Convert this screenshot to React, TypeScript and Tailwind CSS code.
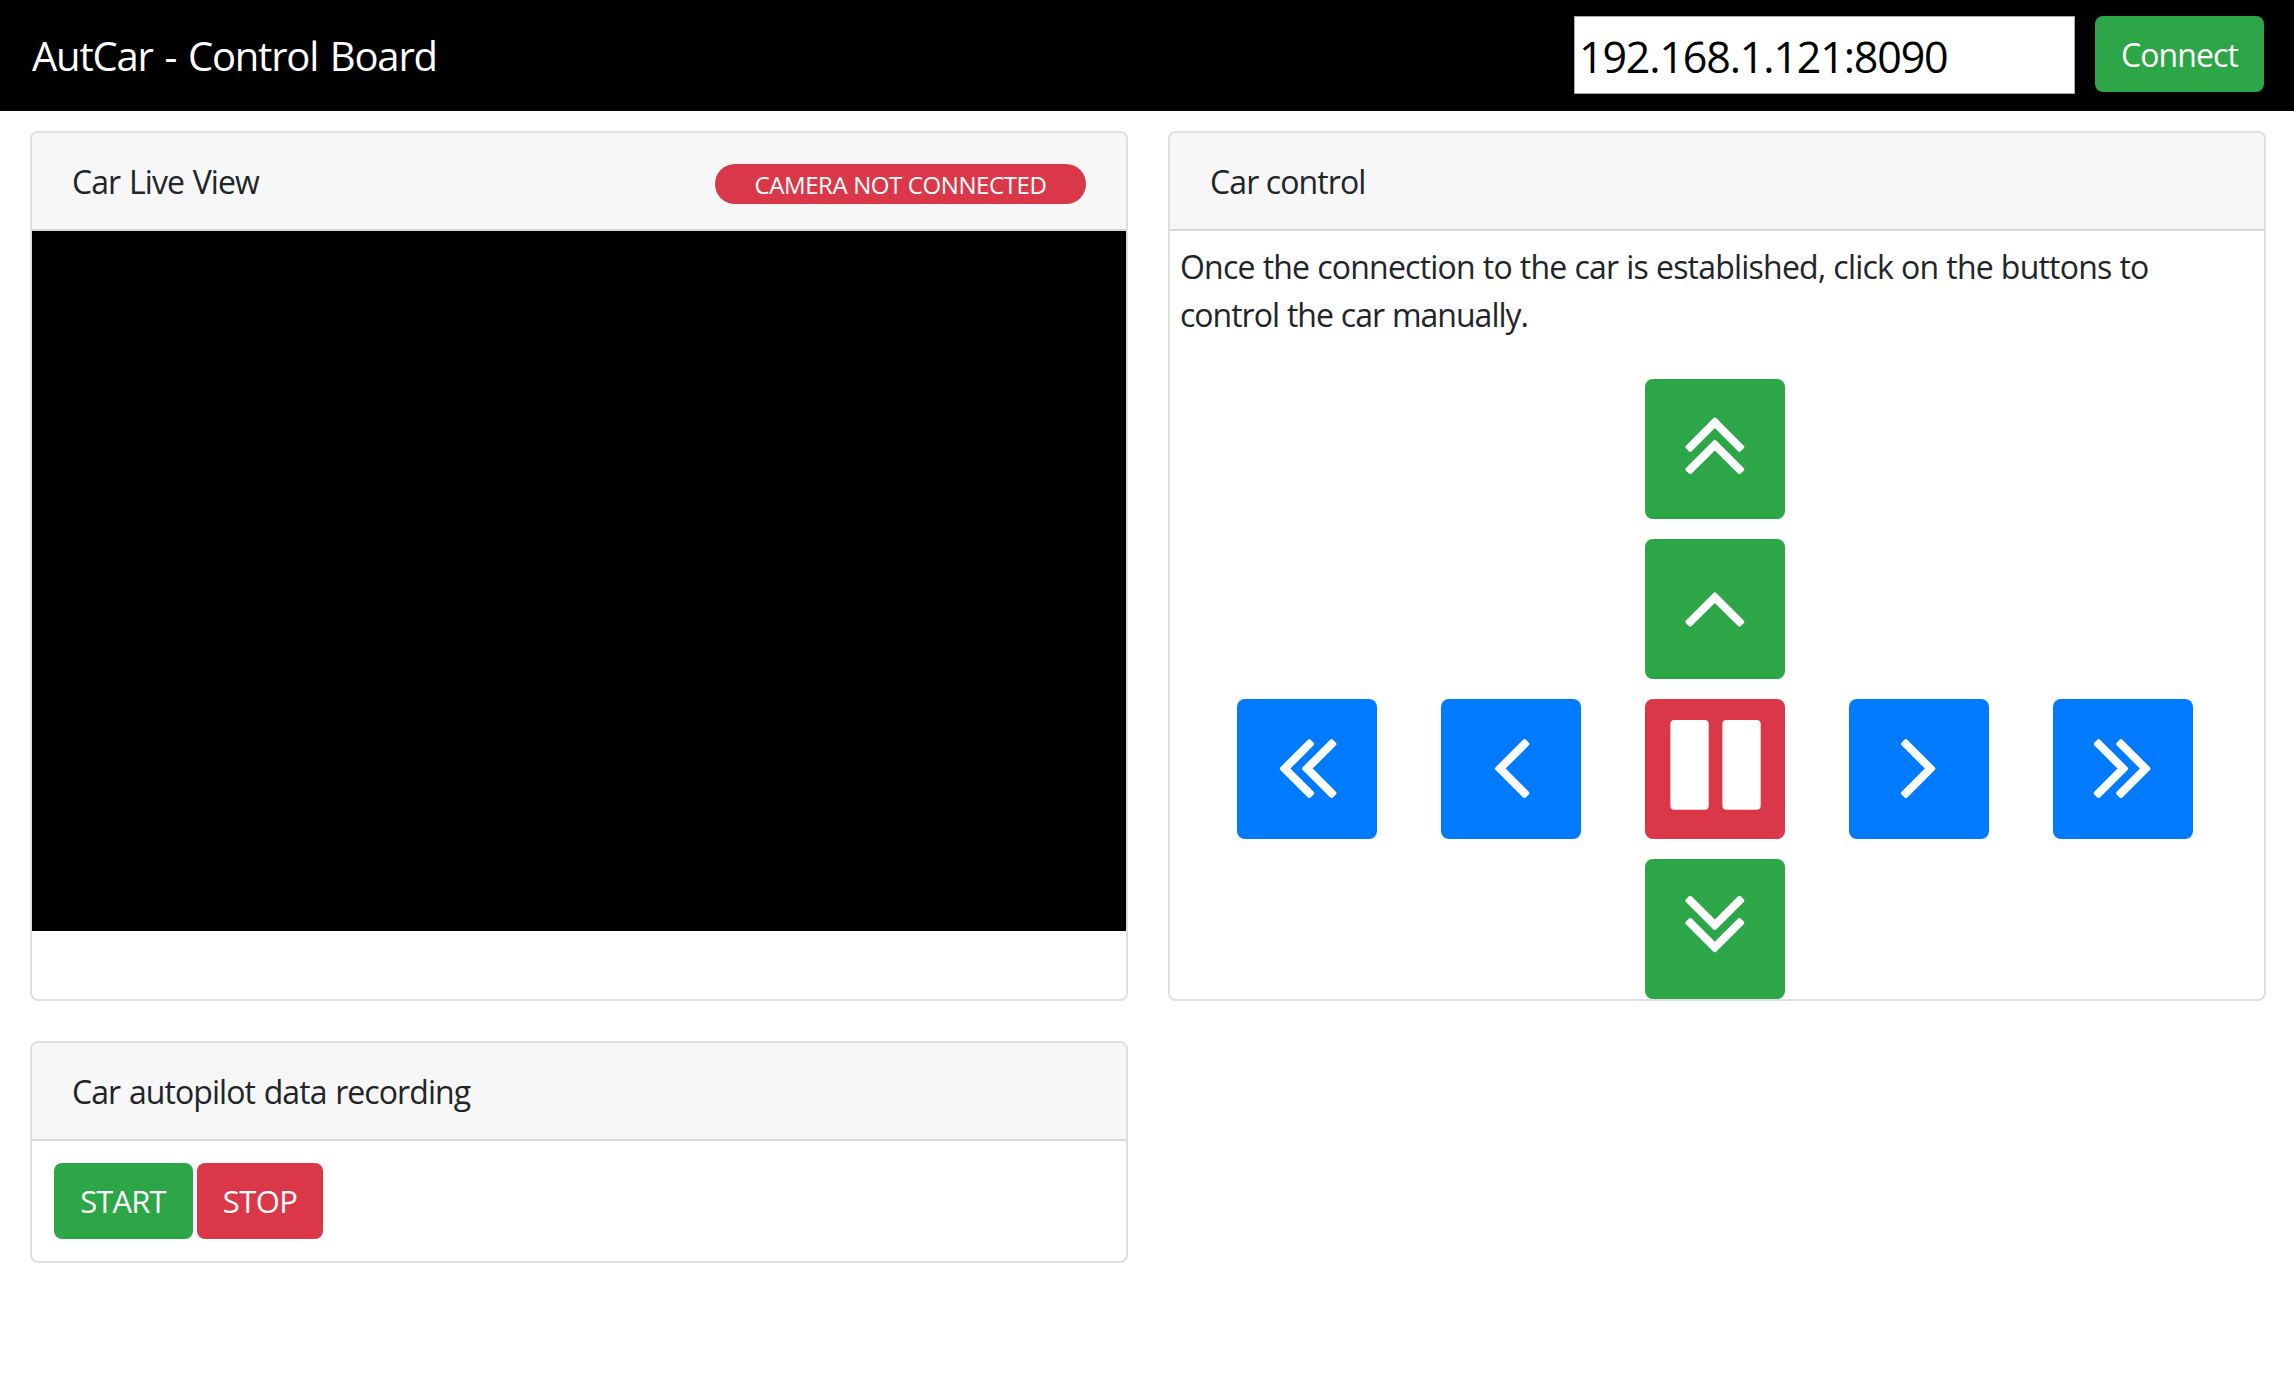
import React from "react";

type ChevronPoint = [number, number];

const ANGLE_UP =
  "M1075 736q0 13-10 23l-50 50q-10 10-23 10t-23-10l-393-393-393 393q-10 10-23 10t-23-10l-50-50q-10-10-10-23t10-23l466-466q10-10 23-10t23 10l466 466q10 10 10 23z";

function Chevrons({ rotate, at }: { rotate: number; at: ChevronPoint[] }) {
  return (
    <svg viewBox="0 0 140 140" className="block h-[140px] w-[140px] fill-white" aria-hidden="true">
      {at.map(([x, y]) => (
        <path
          key={`${x}-${y}`}
          d={ANGLE_UP}
          transform={`translate(${x} ${y}) rotate(${rotate}) scale(0.0591) translate(-576 -528)`}
        />
      ))}
    </svg>
  );
}

function PauseIcon() {
  return (
    <svg viewBox="0 0 140 140" className="block h-[140px] w-[140px] fill-white" aria-hidden="true">
      <rect x="25.4" y="21" width="38.3" height="89.7" rx="4" />
      <rect x="77.4" y="21" width="38.3" height="89.7" rx="4" />
    </svg>
  );
}

function Card({
  title,
  titleClass,
  badge,
  className = "",
  children,
}: {
  title: string;
  titleClass: string;
  badge?: React.ReactNode;
  className?: string;
  children: React.ReactNode;
}) {
  return (
    <section className={`rounded-lg border-2 border-[#dfdfdf] bg-white ${className}`}>
      <header className="flex h-[98px] items-center justify-between rounded-t-md border-b-2 border-[#d8d8d8] bg-[#f7f7f7] px-10">
        <h2 className={`pt-[2px] text-[32px] leading-[48px] ${titleClass}`}>{title}</h2>
        {badge}
      </header>
      {children}
    </section>
  );
}

function PadButton({
  label,
  className,
  children,
}: {
  label: string;
  className: string;
  children: React.ReactNode;
}) {
  return (
    <button aria-label={label} className={`h-[140px] w-[140px] rounded-lg ${className}`}>
      {children}
    </button>
  );
}

export default function App() {
  return (
    <div className="min-h-[1385px] w-full bg-white font-['Open_Sans','Noto_Sans',sans-serif] text-[#212529]">
      <nav className="flex h-[111px] items-center bg-black pr-[30px] pl-8">
        <h1 className="flex-1 pt-px text-[40px] leading-[60px] tracking-[-1.2px] text-white [word-spacing:2.6px]">
          AutCar - Control Board
        </h1>
        <div className="flex h-[79px] items-start gap-5">
          <input
            aria-label="Car address"
            defaultValue="192.168.1.121:8090"
            className="h-[78px] w-[501px] border border-[#a9a9a9] bg-white pt-[3px] pl-1 text-[43px] tracking-[-1.16px] text-black"
          />
          <button className="h-[76px] w-[169px] rounded-lg bg-[#2da647] pt-[2px] text-[32px] tracking-[-0.88px] text-white">
            Connect
          </button>
        </div>
      </nav>

      <main className="grid grid-cols-[1098px_1098px] items-start gap-10 pt-5 pl-[30px]">
        <Card
          title="Car Live View"
          titleClass="tracking-[-0.92px] [word-spacing:1.3px]"
          className="h-[870px]"
          badge={
            <span className="mt-[6px] h-10 w-[371px] rounded-full bg-[#da3848] pt-px text-center text-2xl leading-10 tracking-[-0.4px] text-white">
              CAMERA NOT CONNECTED
            </span>
          }
        >
          <div className="h-[700px] bg-black" />
        </Card>

        <Card title="Car control" titleClass="tracking-[-0.9px]" className="h-[870px]">
          <p className="pt-3 pl-[10px] text-[32px] leading-[48px]">
            <span className="block tracking-[-0.78px] [word-spacing:0.4px]">
              Once the connection to the car is established, click on the buttons to
            </span>
            <span className="block tracking-[-1px] [word-spacing:0.6px]">
              control the car manually.
            </span>
          </p>
          <div className="mt-10 ml-[67px] grid grid-cols-[repeat(5,140px)] gap-x-16 gap-y-5">
            <PadButton label="Fast forward" className="col-start-3 bg-[#2da647]">
              <Chevrons rotate={0} at={[[69.85, 55.7], [69.85, 78]]} />
            </PadButton>
            <PadButton label="Forward" className="col-start-3 bg-[#2da647]">
              <Chevrons rotate={0} at={[[69.85, 70.5]]} />
            </PadButton>
            <PadButton label="Hard left" className="col-start-1 bg-[#007bff]">
              <Chevrons rotate={-90} at={[[60, 69.6], [82.3, 69.6]]} />
            </PadButton>
            <PadButton label="Left" className="bg-[#007bff]">
              <Chevrons rotate={-90} at={[[71.2, 69.6]]} />
            </PadButton>
            <PadButton label="Pause" className="bg-[#da3848]">
              <PauseIcon />
            </PadButton>
            <PadButton label="Right" className="bg-[#007bff]">
              <Chevrons rotate={90} at={[[69.2, 69.6]]} />
            </PadButton>
            <PadButton label="Hard right" className="bg-[#007bff]">
              <Chevrons rotate={90} at={[[57.9, 69.6], [80.3, 69.6]]} />
            </PadButton>
            <PadButton label="Reverse" className="col-start-3 bg-[#2da647]">
              <Chevrons rotate={180} at={[[69.85, 53.9], [69.85, 76.1]]} />
            </PadButton>
          </div>
        </Card>

        <Card
          title="Car autopilot data recording"
          titleClass="tracking-[-0.93px] [word-spacing:1.3px]"
          className="h-[222px]"
        >
          <div className="flex gap-1 px-[22px] pt-[22px] text-[31px] text-white">
            <button className="h-[76px] w-[139px] rounded-lg bg-[#2da647] pt-px pr-px tracking-[-0.85px]">
              START
            </button>
            <button className="h-[76px] w-[126px] rounded-lg bg-[#da3848] pt-px tracking-[-0.57px]">
              STOP
            </button>
          </div>
        </Card>
      </main>
    </div>
  );
}
